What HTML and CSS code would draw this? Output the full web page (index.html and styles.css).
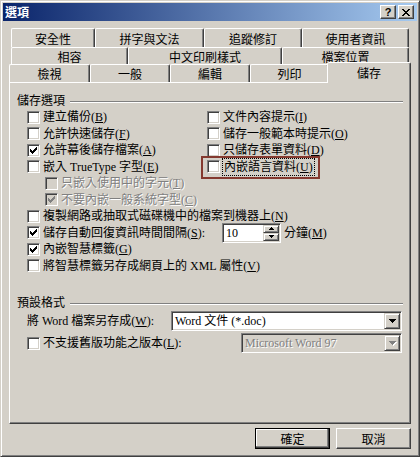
FILE: index.html
```html
<!DOCTYPE html>
<html lang="zh-Hant">
<head>
<meta charset="utf-8">
<title>選項</title>
<link rel="stylesheet" href="styles.css">
</head>
<body>
<div class="win">
  <div class="title">
    <span class="title-text">選項</span>
    <div class="title-btns">
      <span class="tbtn help">?</span>
      <span class="tbtn"><svg width="8" height="7" viewBox="0 0 8 7" shape-rendering="crispEdges"><path d="M0 0h2v1h-2zM6 0h2v1h-2zM1 1h2v1h-2zM5 1h2v1h-2zM2 2h4v1h-4zM3 3h2v1h-2zM2 4h4v1h-4zM1 5h2v1h-2zM5 5h2v1h-2zM0 6h2v1h-2zM6 6h2v1h-2z"/></svg></span>
    </div>
  </div>

  <div class="tabs">
    <div class="tabrow r1">
      <div class="tab">安全性</div><div class="tab">拼字與文法</div><div class="tab">追蹤修訂</div><div class="tab">使用者資訊</div>
    </div>
    <div class="tabrow r2">
      <div class="tab">相容</div><div class="tab">中文印刷樣式</div><div class="tab">檔案位置</div>
    </div>
    <div class="tabrow r3">
      <div class="tab">檢視</div><div class="tab">一般</div><div class="tab">編輯</div><div class="tab">列印</div><div class="tab sel">儲存</div>
    </div>
  </div>

  <div class="panel">
    <div class="ghead"><span>儲存選項</span><span class="line"></span></div>
    <div class="opts">
      <div class="grid2">
        <div class="row"><span class="cb"></span><span>建立備份(<u>B</u>)</span></div>
        <div class="row"><span class="cb"></span><span>文件內容提示(<u>I</u>)</span></div>
        <div class="row"><span class="cb"></span><span>允許快速儲存(<u>F</u>)</span></div>
        <div class="row"><span class="cb"></span><span>儲存一般範本時提示(<u>O</u>)</span></div>
        <div class="row"><span class="cb"><svg width="11" height="11" viewBox="1 1 11 11" shape-rendering="crispEdges"><path d="M3 5v3h1v1h1v1h1v-1h1v-1h1v-1h1v-1h1v-3h-1v1h-1v1h-1v1h-1v1h-1v-1h-1v-1z"/></svg></span><span>允許幕後儲存檔案(<u>A</u>)</span></div>
        <div class="row"><span class="cb"></span><span>只儲存表單資料(<u>D</u>)</span></div>
        <div class="row"><span class="cb"></span><span>嵌入 TrueType 字型(<u>E</u>)</span></div>
        <div class="row"><span class="cb"></span><span class="focus">內嵌語言資料(<u>U</u>)</span></div>
      </div>
      <div class="row sub dis"><span class="cb"></span><span>只嵌入使用中的字元(<u>T</u>)</span></div>
      <div class="row sub dis"><span class="cb"><svg width="11" height="11" viewBox="1 1 11 11" shape-rendering="crispEdges"><path d="M3 5v3h1v1h1v1h1v-1h1v-1h1v-1h1v-1h1v-3h-1v1h-1v1h-1v1h-1v1h-1v-1h-1v-1z"/></svg></span><span>不要內嵌一般系統字型(<u>C</u>)</span></div>
      <div class="row"><span class="cb"></span><span>複製網路或抽取式磁碟機中的檔案到機器上(<u>N</u>)</span></div>
      <div class="row"><span class="cb"><svg width="11" height="11" viewBox="1 1 11 11" shape-rendering="crispEdges"><path d="M3 5v3h1v1h1v1h1v-1h1v-1h1v-1h1v-1h1v-3h-1v1h-1v1h-1v1h-1v1h-1v-1h-1v-1z"/></svg></span><span class="lbl-auto">儲存自動回復資訊時間間隔(<u>S</u>):</span>
        <span class="spin"><span class="spin-val">10</span><span class="spin-btns"><span class="sbtn"><svg width="5" height="3" viewBox="0 0 5 3" shape-rendering="crispEdges"><path d="M2 0h1v1h1v1h1v1h-5v-1h1v-1h1z"/></svg></span><span class="sbtn"><svg width="5" height="3" viewBox="0 0 5 3" shape-rendering="crispEdges"><path d="M0 0h5v1h-1v1h-1v1h-1v-1h-1v-1h-1z"/></svg></span></span></span>
        <span class="unit">分鐘(<u>M</u>)</span></div>
      <div class="row"><span class="cb"><svg width="11" height="11" viewBox="1 1 11 11" shape-rendering="crispEdges"><path d="M3 5v3h1v1h1v1h1v-1h1v-1h1v-1h1v-1h1v-3h-1v1h-1v1h-1v1h-1v1h-1v-1h-1v-1z"/></svg></span><span>內嵌智慧標籤(<u>G</u>)</span></div>
      <div class="row"><span class="cb"></span><span>將智慧標籤另存成網頁上的 XML 屬性(<u>V</u>)</span></div>
    </div>

    <div class="ghead ghead2"><span>預設格式</span><span class="line"></span></div>
    <div class="frow">
      <span>將 Word 檔案另存成(<u>W</u>):</span>
      <span class="combo w1"><span class="val">Word 文件 (*.doc)</span><span class="dd"><svg width="7" height="4" viewBox="0 0 7 4" shape-rendering="crispEdges"><path d="M0 0h7v1h-1v1h-1v1h-1v1h-1v-1h-1v-1h-1v-1h-1z"/></svg></span></span>
    </div>
    <div class="frow frow2">
      <span class="cb"></span><span>不支援舊版功能之版本(<u>L</u>):</span>
      <span class="combo w2 dis"><span class="val">Microsoft Word 97</span><span class="dd"><svg width="7" height="4" viewBox="0 0 7 4" shape-rendering="crispEdges"><path d="M0 0h7v1h-1v1h-1v1h-1v1h-1v-1h-1v-1h-1v-1h-1z"/></svg></span></span>
    </div>
  </div>

  <div class="btns">
    <span class="btn def">確定</span>
    <span class="btn">取消</span>
  </div>

  <div class="annot"></div>
</div>
</body>
</html>
```

FILE: styles.css
```css
* { box-sizing: border-box; }
html, body { margin: 0; padding: 0; }
body {
  background: #d4d0c8;
  font-family: "Liberation Serif", "Noto Sans CJK TC", serif;
  font-size: 12px;
  line-height: 14px;
  color: #000;
}
u { text-decoration: underline; }

.win {
  position: relative;
  width: 420px;
  height: 457px;
  padding: 2px;
  background: #d4d0c8;
  border: 1px solid;
  border-color: #d4d0c8 #404040 #404040 #d4d0c8;
  box-shadow: inset 1px 1px #fff, inset -1px -1px #808080;
}

/* title bar */
.title {
  height: 18px;
  display: flex;
  align-items: center;
  justify-content: space-between;
  padding: 0 3px 0 2px;
  background: linear-gradient(to right, #0a246a, #a6caf0);
}
.title-text {
  color: #fff;
  font-family: "Noto Sans CJK TC", sans-serif;
  font-weight: bold;
  font-size: 12px;
}
.title-btns { display: flex; gap: 2px; }
.tbtn {
  width: 16px;
  height: 14px;
  display: flex;
  align-items: center;
  justify-content: center;
  background: #d4d0c8;
  border: 1px solid;
  border-color: #fff #404040 #404040 #fff;
  box-shadow: inset -1px -1px #808080;
}
.help {
  font-family: "Liberation Sans", sans-serif;
  font-weight: bold;
  font-size: 11px;
  line-height: 11px;
}

/* tabs */
.tabs { margin-top: 7px; }
.tabrow { display: grid; }
.r1 { grid-template-columns: 84px 109px 98px 107px; grid-template-rows: 19px; margin-left: 8px; }
.r2 { grid-template-columns: 117px 154px 127px; grid-template-rows: 17px; margin-left: 8px; }
.r3 { grid-template-columns: 81px 80px 80px 79px 80px; grid-template-rows: 18px; margin-left: 6px; }
.tab {
  display: flex;
  align-items: center;
  justify-content: center;
  background: #d4d0c8;
  border-top: 1px solid #fff;
  border-left: 1px solid #fff;
  border-right: 1px solid #404040;
  box-shadow: inset -1px 0 #808080;
  border-radius: 2px 2px 0 0;
  font-family: "Noto Sans CJK TC", sans-serif;
  padding-top: 1px;
}
.tab.sel {
  position: relative;
  z-index: 1;
  align-self: start;
  height: 21px;
  margin: -2px -2px 0 -2px;
  padding-top: 0;
}

/* panel */
.panel {
  margin-left: 6px;
  width: 402px;
  height: 342px;
  border: 1px solid;
  border-color: #fff #404040 #404040 #fff;
  box-shadow: inset -1px -1px #808080;
}
.ghead {
  display: flex;
  align-items: center;
  height: 17px;
  margin: 9px 7px 0 7px;
}
.ghead .line {
  flex: 1;
  height: 2px;
  margin-left: 5px;
  margin-top: 2px;
  border-top: 1px solid #808080;
  border-bottom: 1px solid #fff;
}
.ghead2 { margin-top: 21px; height: 16px; }

.opts { padding-left: 17px; }
.grid2 {
  display: grid;
  grid-template-columns: 180px auto;
  grid-auto-rows: 16.5px;
}
.row {
  display: flex;
  align-items: center;
  height: 16.5px;
  white-space: nowrap;
}
.sub { padding-left: 18px; }
.dis { color: #808080; text-shadow: 1px 1px #fff; }

.cb {
  flex: none;
  width: 13px;
  height: 13px;
  margin-right: 3px;
  background: #fff;
  border: 1px solid;
  border-color: #808080 #fff #fff #808080;
  box-shadow: inset 1px 1px #404040, inset -1px -1px #d4d0c8;
}
.cb svg { display: block; fill: #000; }
.dis .cb { background: #d4d0c8; }
.dis .cb svg { fill: #808080; }

.focus {
  outline: 1px dotted #000;
  padding: 1px 1px;
}

.lbl-auto { width: 179px; }
.spin {
  display: flex;
  width: 59px;
  height: 20px;
  padding: 1px;
  background: #fff;
  border: 1px solid;
  border-color: #808080 #fff #fff #808080;
  box-shadow: inset 1px 1px #404040, inset -1px -1px #d4d0c8;
}
.spin-val { flex: 1; padding-left: 2px; display: flex; align-items: center; }
.spin-btns { display: flex; flex-direction: column; width: 16px; }
.sbtn {
  flex: 1;
  display: flex;
  align-items: center;
  justify-content: center;
  background: #d4d0c8;
  border: 1px solid;
  border-color: #d4d0c8 #404040 #404040 #d4d0c8;
  box-shadow: inset 1px 1px #fff, inset -1px -1px #808080;
}
.sbtn svg { display: block; fill: #000; }
.unit { margin-left: 3px; }

/* default format rows */
.frow {
  display: flex;
  align-items: center;
  height: 20px;
  padding-left: 17px;
  margin-right: 8px;
  white-space: nowrap;
}
.frow2 { margin-top: 2px; }
.combo {
  display: flex;
  align-items: center;
  height: 20px;
  margin-left: auto;
  padding: 1px;
  background: #fff;
  border: 1px solid;
  border-color: #808080 #fff #fff #808080;
  box-shadow: inset 1px 1px #404040, inset -1px -1px #d4d0c8;
}
.w1 { width: 231px; }
.w2 { width: 161px; }
.combo .val { flex: 1; padding-left: 2px; }
.combo.dis { background: #d4d0c8; }
.dd {
  width: 16px;
  height: 16px;
  display: flex;
  align-items: center;
  justify-content: center;
  background: #d4d0c8;
  border: 1px solid;
  border-color: #d4d0c8 #404040 #404040 #d4d0c8;
  box-shadow: inset 1px 1px #fff, inset -1px -1px #808080;
}
.dd svg { display: block; fill: #000; }
.combo.dis .dd svg { fill: #808080; filter: drop-shadow(1px 1px 0 #fff); }

/* buttons */
.btns {
  display: flex;
  justify-content: flex-end;
  gap: 6px;
  margin-top: 4px;
  padding-right: 6px;
}
.btn {
  width: 75px;
  height: 21px;
  display: flex;
  align-items: center;
  justify-content: center;
  background: #d4d0c8;
  border: 1px solid;
  border-color: #fff #404040 #404040 #fff;
  box-shadow: inset -1px -1px #808080;
  font-family: "Noto Sans CJK TC", sans-serif;
}
.btn.def {
  border-color: #000;
  box-shadow: inset -1px -1px #404040, inset -2px -2px #808080, inset 1px 1px #fff;
}

/* highlight annotation drawn over the dialog */
.annot {
  position: absolute;
  left: 200px;
  top: 155px;
  width: 119px;
  height: 23px;
  border: 2px solid #84392f;
}
```
